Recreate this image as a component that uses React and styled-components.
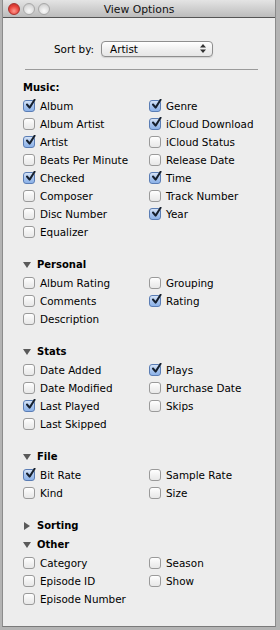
import styled, { createGlobalStyle } from 'styled-components';

const GlobalStyle = createGlobalStyle`
  html, body {
    margin: 0;
    padding: 0;
    background: #b4b4b4;
  }
  body {
    font-family: "DejaVu Sans", "Liberation Sans", sans-serif;
    -webkit-font-smoothing: antialiased;
  }
`;

const sections = [
  {
    title: 'Personal',
    items: [
      ['Album Rating', false],
      ['Grouping', false],
      ['Comments', false],
      ['Rating', true],
      ['Description', false],
    ],
  },
  {
    title: 'Stats',
    items: [
      ['Date Added', false],
      ['Plays', true],
      ['Date Modified', false],
      ['Purchase Date', false],
      ['Last Played', true],
      ['Skips', false],
      ['Last Skipped', false],
    ],
  },
  {
    title: 'File',
    items: [
      ['Bit Rate', true],
      ['Sample Rate', false],
      ['Kind', false],
      ['Size', false],
    ],
  },
];

const music = [
  ['Album', true],
  ['Genre', true],
  ['Album Artist', false],
  ['iCloud Download', true],
  ['Artist', true],
  ['iCloud Status', false],
  ['Beats Per Minute', false],
  ['Release Date', false],
  ['Checked', true],
  ['Time', true],
  ['Composer', false],
  ['Track Number', false],
  ['Disc Number', false],
  ['Year', true],
  ['Equalizer', false],
];

const other = [
  ['Category', false],
  ['Season', false],
  ['Episode ID', false],
  ['Show', false],
  ['Episode Number', false],
];

const CheckItem = ({ label, checked }) => (
  <Item>
    <Box $checked={checked}>
      {checked && (
        <svg width="11" height="11" viewBox="0 0 11 11">
          <path d="M2 5.5 L4.6 8.6 L9.6 0.8" fill="none" stroke="#16202e" strokeWidth="2" strokeLinecap="round" strokeLinejoin="round" />
        </svg>
      )}
    </Box>
    <span>{label}</span>
  </Item>
);

const Disclosure = ({ open }) => (
  <svg width="8" height="8" viewBox="0 0 8 8">
    {open ? <path d="M0 1 H8 L4 7 Z" fill="#5a5a5a" /> : <path d="M1 0 V8 L7 4 Z" fill="#5a5a5a" />}
  </svg>
);

export default function App() {
  return (
    <>
      <GlobalStyle />
      <Window>
        <TitleBar>
          <Lights>
            <Light $red />
            <Light />
            <Light />
          </Lights>
          <Title>View Options</Title>
        </TitleBar>
        <Body>
          <SortRow>
            <span>Sort by:</span>
            <Popup>
              <span>Artist</span>
              <svg width="6" height="9" viewBox="0 0 6 9">
                <path d="M0 3.5 L3 0 L6 3.5 Z M0 5.5 L3 9 L6 5.5 Z" fill="#333" />
              </svg>
            </Popup>
          </SortRow>
          <Separator />
          <Section>
            <Header $plain>Music:</Header>
            <Grid>
              {music.map(([l, c]) => (
                <CheckItem key={l} label={l} checked={c} />
              ))}
            </Grid>
          </Section>
          {sections.map((s) => (
            <Section key={s.title} $spaced>
              <Header>
                <Disclosure open />
                {s.title}
              </Header>
              <Grid>
                {s.items.map(([l, c]) => (
                  <CheckItem key={l} label={l} checked={c} />
                ))}
              </Grid>
            </Section>
          ))}
          <Section $spaced>
            <Header>
              <Disclosure />
              Sorting
            </Header>
          </Section>
          <Section>
            <Header>
              <Disclosure open />
              Other
            </Header>
            <Grid>
              {other.map(([l, c]) => (
                <CheckItem key={l} label={l} checked={c} />
              ))}
            </Grid>
          </Section>
        </Body>
      </Window>
    </>
  );
}

const Window = styled.div`
  margin: 0 4px 0 2px;
  height: 627px;
  box-sizing: border-box;
  background: #ededed;
  border-left: 1px solid #8c8c8c;
  border-right: 1px solid #8c8c8c;
  border-bottom: 1px solid #7a7a7a;
  display: flex;
  flex-direction: column;
`;

const TitleBar = styled.div`
  height: 17px;
  flex-shrink: 0;
  position: relative;
  display: flex;
  align-items: center;
  justify-content: center;
  background: linear-gradient(#e4e4e4, #bcbcbc);
  border-bottom: 1px solid #555;
`;

const Lights = styled.div`
  position: absolute;
  left: 5px;
  top: 3px;
  display: flex;
  gap: 3px;
`;

const Light = styled.div`
  width: 12px;
  height: 12px;
  border-radius: 50%;
  box-sizing: border-box;
  border: 1px solid ${(p) => (p.$red ? '#a8302c' : '#a8a8a8')};
  background: ${(p) =>
    p.$red
      ? 'radial-gradient(circle at 50% 70%, #ff9a8f 0%, #e8433b 55%, #b82a24 100%)'
      : 'radial-gradient(circle at 50% 70%, #fafafa 0%, #dcdcdc 60%, #bdbdbd 100%)'};
`;

const Title = styled.div`
  font-size: 10.8px;
  color: #111;
  margin-top: 1px;
`;

const Body = styled.div`
  padding: 22px 0 0 20px;
  font-size: 10.4px;
  color: #000;
`;

const SortRow = styled.div`
  display: flex;
  align-items: center;
  gap: 7px;
  padding-left: 31px;
  height: 17px;
`;

const Popup = styled.div`
  width: 112px;
  height: 16px;
  box-sizing: border-box;
  border: 1px solid #8e8e8e;
  border-radius: 4px;
  background: linear-gradient(#ffffff, #f0f0f0 50%, #e6e6e6);
  display: flex;
  align-items: center;
  justify-content: space-between;
  padding: 0 6px 0 8px;
  box-shadow: 0 1px 1px rgba(0, 0, 0, 0.12);
`;

const Separator = styled.div`
  margin: 12px 17px 0 2px;
  border-top: 1px solid #9b9b9b;
`;

const Section = styled.div`
  margin-top: ${(p) => (p.$spaced ? '14px' : '0')};
`;

const Header = styled.div`
  height: 19px;
  display: flex;
  align-items: center;
  gap: 6px;
  font-weight: bold;
  font-size: 10px;
  margin-top: ${(p) => (p.$plain ? '8px' : '0')};
`;

const Grid = styled.div`
  display: grid;
  grid-template-columns: 126px 1fr;
  grid-auto-rows: 18px;
`;

const Item = styled.div`
  display: flex;
  align-items: center;
  gap: 5px;
  white-space: nowrap;
`;

const Box = styled.div`
  width: 12px;
  height: 12px;
  box-sizing: border-box;
  border-radius: 3px;
  border: 1px solid ${(p) => (p.$checked ? '#5a7db5' : '#9a9a9a')};
  background: ${(p) =>
    p.$checked
      ? 'linear-gradient(#d6e4f7, #a9c5ee 50%, #8cb2e8)'
      : 'linear-gradient(#ffffff, #f2f2f2 50%, #e8e8e8)'};
  display: flex;
  align-items: center;
  justify-content: center;
  position: relative;
  & svg {
    position: absolute;
    left: 1px;
    top: -2px;
  }
`;
